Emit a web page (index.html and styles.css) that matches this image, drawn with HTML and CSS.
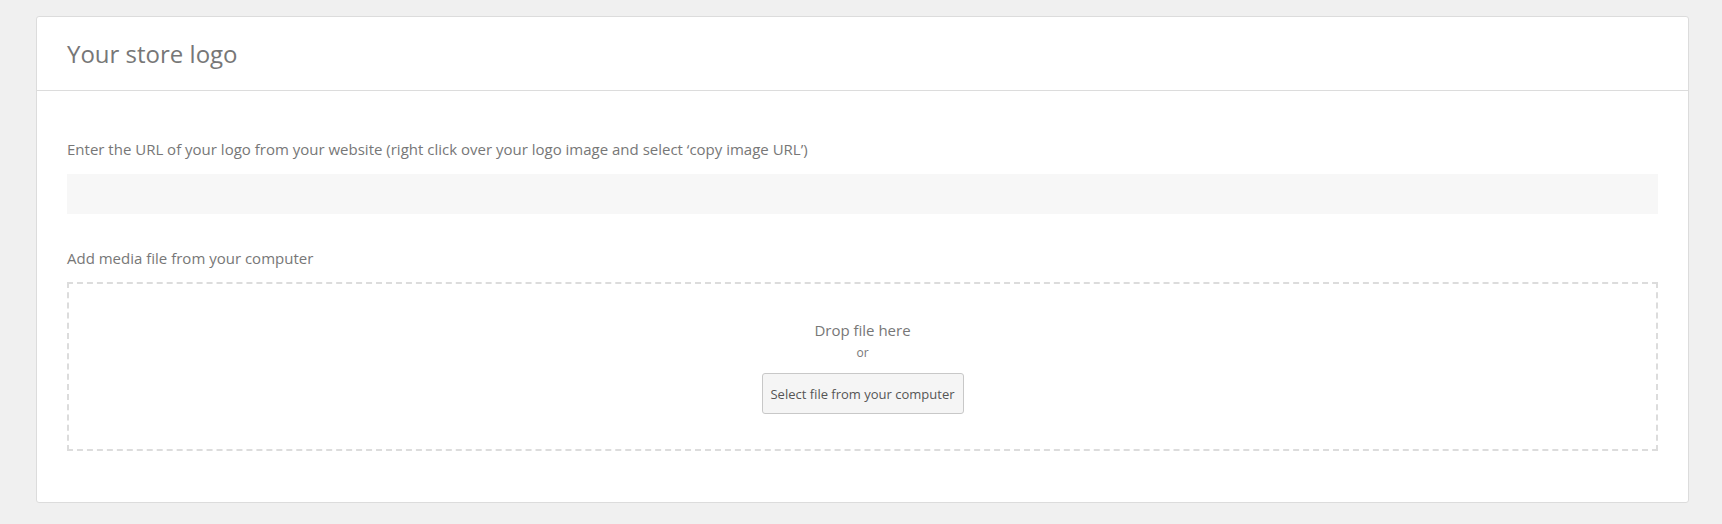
FILE: index.html
```html
<!DOCTYPE html>
<html>
<head>
<meta charset="utf-8">
<link rel="stylesheet" href="styles.css">
</head>
<body>
<div class="page">
  <section class="card">
    <header class="card-header">
      <h2 class="card-title">Your store logo</h2>
    </header>
    <div class="card-body">
      <label class="field-label">Enter the URL of your logo from your website (right click over your logo image and select ‘copy image URL’)</label>
      <input class="url-input" type="text">
      <label class="field-label media-label">Add media file from your computer</label>
      <div class="dropzone">
        <div class="drop-text">Drop file here</div>
        <div class="drop-or">or</div>
        <button class="select-btn" type="button">Select file from your computer</button>
      </div>
    </div>
  </section>
</div>
</body>
</html>
```
FILE: styles.css
```css
html, body {
  margin: 0;
  padding: 0;
  background: #f0f0f0;
  font-family: "Open Sans", "Liberation Sans", sans-serif;
  color: #777;
}
.page {
  padding: 16px 33px 0 36px;
}
.card {
  background: #fff;
  border: 1px solid #dcdcdc;
  border-radius: 3px;
}
.card-header {
  height: 73px;
  border-bottom: 1px solid #dcdcdc;
  display: flex;
  align-items: center;
  padding: 0 30px;
}
.card-title {
  margin: 0;
  font-size: 24px;
  font-weight: 400;
  line-height: 30px;
  color: #777;
}
.card-body {
  padding: 48px 30px 51px;
  display: flex;
  flex-direction: column;
}
.field-label {
  display: block;
  font-size: 15px;
  line-height: 20px;
  color: #777;
}
.url-input {
  margin-top: 15px;
  height: 40px;
  box-sizing: border-box;
  border: none;
  background: #f7f7f7;
  outline: none;
  padding: 0 12px;
}
.media-label {
  margin-top: 34px;
}
.dropzone {
  margin-top: 14px;
  height: 169px;
  box-sizing: border-box;
  border: 2px dashed #dcdcdc;
  display: flex;
  flex-direction: column;
  align-items: center;
  padding-top: 36px;
}
.drop-text {
  font-size: 15px;
  line-height: 20px;
  color: #777;
}
.drop-or {
  font-size: 12px;
  line-height: 16px;
  margin-top: 5px;
  color: #777;
}
.select-btn {
  margin-top: 12px;
  width: 202px;
  height: 41px;
  box-sizing: border-box;
  background: #f5f5f5;
  border: 1px solid #c8c8c8;
  border-radius: 3px;
  font-family: "Open Sans", "Liberation Sans", sans-serif;
  font-size: 13px;
  color: #555;
  padding: 0;
}
```
